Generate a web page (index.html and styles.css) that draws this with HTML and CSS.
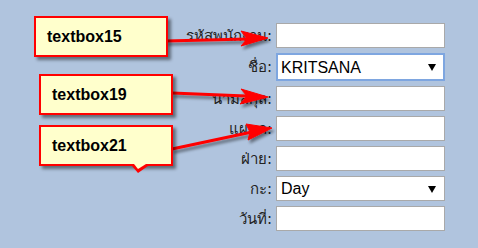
FILE: index.html
```html
<!DOCTYPE html>
<html lang="th">
<head>
  <meta charset="UTF-8">
  <title>Employee Form</title>
  <link rel="stylesheet" href="styles.css">
</head>
<body>

<form class="emp-form">
  <label for="textbox15">รหัสพนักงาน:</label>
  <input type="text" id="textbox15">

  <label for="ddlName">ชื่อ:</label>
  <div class="select-wrap focused">
    <select id="ddlName"><option>KRITSANA</option></select>
  </div>

  <label for="textbox19">นามสกุล:</label>
  <input type="text" id="textbox19">

  <label for="textbox21">แผนก:</label>
  <input type="text" id="textbox21">

  <label for="textbox22">ฝ่าย:</label>
  <input type="text" id="textbox22">

  <label for="ddlShift">กะ:</label>
  <div class="select-wrap">
    <select id="ddlShift"><option>Day</option></select>
  </div>

  <label for="textbox23">วันที่:</label>
  <input type="text" id="textbox23">
</form>

<!-- annotation layer -->
<svg class="arrows" width="478" height="248" viewBox="0 0 478 248">
  <defs>
    <filter id="shadow" x="-10%" y="-50%" width="130%" height="250%">
      <feDropShadow dx="2" dy="3" stdDeviation="1.5" flood-color="#000" flood-opacity="0.45"/>
    </filter>
  </defs>
  <g filter="url(#shadow)" fill="#ff0000" stroke="#ff0000">
    <line x1="166" y1="41" x2="248" y2="39" stroke-width="3"/>
    <polygon points="268,38 241,31 247,39 241,46" stroke-width="1"/>

    <line x1="172" y1="93" x2="246" y2="96" stroke-width="3"/>
    <polygon points="268,97 241,89 247,96 240,104" stroke-width="1"/>

    <line x1="172" y1="149" x2="252" y2="132" stroke-width="3"/>
    <polygon points="272,128 246,124 250,132 248,140" stroke-width="1"/>
  </g>
</svg>

<div class="callout c1">textbox15</div>
<div class="callout c2">textbox19</div>
<div class="callout c3">textbox21</div>

</body>
</html>
```

FILE: styles.css
```css
body {
  margin: 0;
  width: 478px;
  height: 248px;
  overflow: hidden;
  position: relative;
  background: #b0c4de;
  font-family: Tahoma, "DejaVu Sans", "Noto Sans", sans-serif;
}
.emp-form {
  display: grid;
  grid-template-columns: 272px 169px;
  column-gap: 4px;
  row-gap: 5px;
  padding-top: 23px;
}
.emp-form label {
  align-self: center;
  text-align: right;
  font-size: 15px;
  color: #222;
}
.emp-form input {
  box-sizing: border-box;
  height: 25px;
  margin: 0;
  border: 1px solid #a9a9a9;
  background: #fff;
}
.select-wrap {
  position: relative;
  height: 25px;
}
.select-wrap.focused {
  height: 28px;
}
.select-wrap select {
  -webkit-appearance: none;
  appearance: none;
  box-sizing: border-box;
  width: 100%;
  height: 100%;
  margin: 0;
  padding: 0 0 0 4px;
  border: 1px solid #a9a9a9;
  border-radius: 0;
  background: #fff;
  color: #000;
  font-family: "Liberation Sans", Arial, sans-serif;
  font-size: 16px;
}
.select-wrap.focused select {
  border: 2px solid #7ea6e0;
  padding-left: 3px;
}
.select-wrap::after {
  content: "";
  position: absolute;
  right: 9px;
  top: 50%;
  margin-top: -3px;
  border-left: 4px solid transparent;
  border-right: 4px solid transparent;
  border-top: 7px solid #000;
}
.arrows {
  position: absolute;
  left: 0;
  top: 0;
  pointer-events: none;
}
.callout {
  position: absolute;
  box-sizing: border-box;
  width: 134px;
  height: 41px;
  padding-left: 11px;
  line-height: 37px;
  border: 2px solid #ff0000;
  background: #ffffcc;
  box-shadow: 3px 3px 3px rgba(0, 0, 0, 0.45);
  font-family: "Liberation Sans", Arial, sans-serif;
  font-weight: bold;
  font-size: 16px;
  color: #000;
}
.c1 { left: 34px; top: 16px; }
.c2 { left: 39px; top: 74px; }
.c3 { left: 39px; top: 125px; }
.c3::before,
.c3::after {
  content: "";
  position: absolute;
  left: 92px;
  bottom: -8px;
  border-left: 5px solid transparent;
  border-right: 9px solid transparent;
}
.c3::before {
  bottom: -9px;
  border-top: 7px solid #ff0000;
  left: 91px;
  border-left-width: 6px;
  border-right-width: 10px;
}
.c3::after {
  bottom: -5px;
  border-top: 5px solid #ffffcc;
  left: 93px;
  border-left-width: 4px;
  border-right-width: 8px;
}
```
